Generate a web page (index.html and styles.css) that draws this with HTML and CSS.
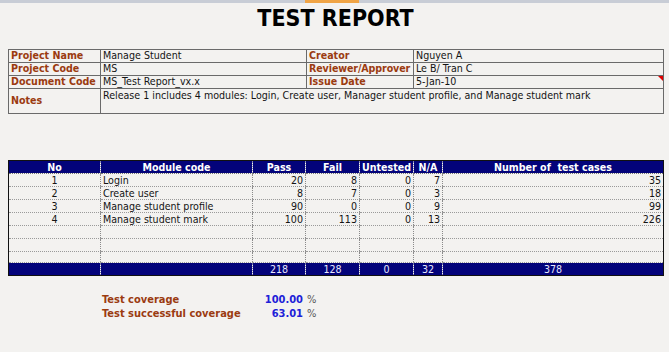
FILE: index.html
```html
<!DOCTYPE html>
<html>
<head>
<meta charset="utf-8">
<link rel="stylesheet" href="styles.css">
</head>
<body>
<div class="strip"><span class="strip-sel"></span></div>
<div class="page">
  <h1 class="title">TEST REPORT</h1>

  <table class="info">
    <colgroup><col class="c1"><col class="c2"><col class="c3"><col class="c4"></colgroup>
    <tr><th>Project Name</th><td>Manage Student</td><th>Creator</th><td>Nguyen A</td></tr>
    <tr><th>Project Code</th><td>MS</td><th class="clip">Reviewer/Approver</th><td>Le B/ Tran C</td></tr>
    <tr><th>Document Code</th><td>MS_Test Report_vx.x</td><th>Issue Date</th><td class="comment">5-Jan-10<span class="flag"></span></td></tr>
    <tr class="notes"><th>Notes</th><td colspan="3">Release 1 includes 4 modules: Login, Create user, Manager student profile, and Manage student mark</td></tr>
  </table>

  <table class="grid">
    <colgroup><col class="g1"><col class="g2"><col class="g3"><col class="g4"><col class="g5"><col class="g6"><col class="g7"></colgroup>
    <thead>
      <tr><th>No</th><th>Module code</th><th>Pass</th><th>Fail</th><th>Untested</th><th>N/A</th><th>Number of&nbsp; test cases</th></tr>
    </thead>
    <tbody>
      <tr><td class="ctr">1</td><td>Login</td><td class="num">20</td><td class="num">8</td><td class="num">0</td><td class="num">7</td><td class="num">35</td></tr>
      <tr><td class="ctr">2</td><td>Create user</td><td class="num">8</td><td class="num">7</td><td class="num">0</td><td class="num">3</td><td class="num">18</td></tr>
      <tr><td class="ctr">3</td><td>Manage student profile</td><td class="num">90</td><td class="num">0</td><td class="num">0</td><td class="num">9</td><td class="num">99</td></tr>
      <tr><td class="ctr">4</td><td>Manage student mark</td><td class="num">100</td><td class="num">113</td><td class="num">0</td><td class="num">13</td><td class="num">226</td></tr>
      <tr><td></td><td></td><td></td><td></td><td></td><td></td><td></td></tr>
      <tr><td></td><td></td><td></td><td></td><td></td><td></td><td></td></tr>
      <tr class="short"><td></td><td></td><td></td><td></td><td></td><td></td><td></td></tr>
    </tbody>
    <tfoot>
      <tr><td></td><td></td><td>218</td><td>128</td><td>0</td><td>32</td><td>378</td></tr>
    </tfoot>
  </table>

  <div class="coverage">
    <span class="cv-label">Test coverage</span><span class="cv-val">100.00</span><span class="cv-pct">%</span>
    <span class="cv-label">Test successful coverage</span><span class="cv-val">63.01</span><span class="cv-pct">%</span>
  </div>
</div>
</body>
</html>
```

FILE: styles.css
```css
html, body {
  margin: 0;
  padding: 0;
  background: #f3f2f0;
}
body {
  font-family: "DejaVu Sans Condensed", "DejaVu Sans", sans-serif;
  font-size: 10.6px;
  color: #141414;
  width: 669px;
  height: 352px;
  overflow: hidden;
}
.strip {
  height: 3px;
  background: #c8cdd6;
  position: relative;
}
.strip-sel {
  position: absolute;
  left: 305px;
  width: 54px;
  top: 0;
  height: 3px;
  background: #f0a445;
}
.page {
  padding: 0 6px 0 8px;
}
.title {
  margin: 0;
  padding-top: 2px;
  height: 44px;
  text-align: center;
  font-family: "DejaVu Sans Condensed", "DejaVu Sans", sans-serif;
  font-weight: bold;
  font-size: 23px;
  line-height: 26px;
  color: #000;
}
.info {
  border-collapse: collapse;
  width: 655px;
  table-layout: fixed;
  border: 1px solid #5a5a5a;
}
.info .c1 { width: 92px; }
.info .c2 { width: 206px; }
.info .c3 { width: 107px; }
.info .c4 { width: 250px; }
.info th, .info td {
  border: 1px solid #6a6a6a;
  height: 11px;
  line-height: 11px;
  padding: 0 2px 1px;
  text-align: left;
  white-space: nowrap;
}
.info th {
  color: #9b3b10;
  font-weight: bold;
}
.info .clip {
  overflow: hidden;
  text-overflow: clip;
  padding-right: 0;
  letter-spacing: -0.1px;
}
.info .notes th, .info .notes td {
  height: 22px;
}
.info .notes td {
  vertical-align: top;
  padding-top: 1px;
}
.info .comment {
  position: relative;
}
.flag {
  position: absolute;
  right: 0;
  top: 0;
  width: 0;
  height: 0;
  border-top: 5px solid #e00000;
  border-left: 5px solid transparent;
}
.grid {
  margin-top: 46px;
  border-collapse: collapse;
  width: 655px;
  table-layout: fixed;
  border: 1px solid #111;
}
.grid .g1 { width: 92px; }
.grid .g2 { width: 152px; }
.grid .g3 { width: 53px; }
.grid .g4 { width: 54px; }
.grid .g5 { width: 54px; }
.grid .g6 { width: 29px; }
.grid .g7 { width: 221px; }
.grid th, .grid td {
  padding: 0 2px;
  height: 12px;
  line-height: 12px;
  white-space: nowrap;
  overflow: hidden;
}
.grid thead th {
  background: #03037a;
  color: #fff;
  font-weight: bold;
  text-align: center;
  border-left: 1px dotted #8a8ab0;
  border-bottom: 1px dotted #777;
}
.grid tbody td {
  border-left: 1px dotted #8a8a8a;
  border-bottom: 1px dotted #9a9a9a;
  height: 12px;
}
.grid tbody .short td {
  height: 10px;
}
.grid .ctr { text-align: center; }
.grid .num { text-align: right; }
.grid tfoot td {
  background: #03037a;
  color: #e8e8ff;
  text-align: center;
  border-left: 1px dotted #7a7aa8;
}
.coverage {
  margin-top: 18px;
  margin-left: 94px;
  display: grid;
  grid-template-columns: 144px 53px auto;
  column-gap: 4px;
  row-gap: 2px;
  font-weight: bold;
  font-size: 11px;
  line-height: 12px;
}
.cv-label { color: #9b3b10; }
.cv-val { color: #2020d8; text-align: right; }
.cv-pct { color: #555; font-weight: normal; }
```
